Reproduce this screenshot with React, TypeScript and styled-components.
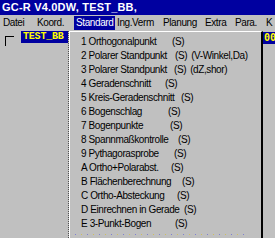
import React from "react";
import styled, { createGlobalStyle } from "styled-components";

const GlobalStyle = createGlobalStyle`
    html, body {
        margin: 0;
        padding: 0;
        background: #c0c0c0;
    }
`;

type MenuEntry = {
    label: string,
    width: number,
    active?: boolean
}

type Command = {
    label: string,
    tagAt: number,
    extra?: string
}

const menus: MenuEntry[] = [
    { label: "Datei", width: 34 },
    { label: "Koord.", width: 39 },
    { label: "Standard", width: 41, active: true },
    { label: "Ing.Verm", width: 46 },
    { label: "Planung", width: 42 },
    { label: "Extra", width: 30 },
    { label: "Para.", width: 31 },
    { label: "K", width: 10 },
];

const commands: Command[] = [
    { label: "1 Orthogonalpunkt", tagAt: 172 },
    { label: "2 Polarer Standpunkt", tagAt: 175, extra: "(V-Winkel,Da)" },
    { label: "3 Polarer Standpunkt", tagAt: 174, extra: "(dZ,shor)" },
    { label: "4 Geradenschnitt", tagAt: 165 },
    { label: "5 Kreis-Geradenschnitt", tagAt: 181 },
    { label: "6 Bogenschlag", tagAt: 168 },
    { label: "7 Bogenpunkte", tagAt: 170 },
    { label: "8 Spannmaßkontrolle", tagAt: 178 },
    { label: "9 Pythagorasprobe", tagAt: 174 },
    { label: "A Ortho+Polarabst.", tagAt: 171 },
    { label: "B Flächenberechnung", tagAt: 182 },
    { label: "C Ortho-Absteckung", tagAt: 177 },
    { label: "D Einrechnen in Gerade", tagAt: 184 },
    { label: "E 3-Punkt-Bogen", tagAt: 175 },
];

// text column of the dropdown starts here
const TEXT_X = 81;

const Screen = styled.div`
    width: 275px;
    height: 238px;
    overflow: hidden;
    display: flex;
    flex-direction: column;
    background: #c0c0c0;
    font-family: "Liberation Sans", Arial, sans-serif;
`;

const TitleBar = styled.div`
    height: 15px;
    line-height: 15px;
    padding-left: 2px;
    background: #0000a0;
    color: #ffffff;
    font-weight: bold;
    font-size: 11px;
    letter-spacing: 0.2px;
    white-space: nowrap;
`;

const MenuBar = styled.div`
    height: 16px;
    display: flex;
    align-items: center;
    padding-left: 1px;
    white-space: nowrap;
`;

const MenuItem = styled.div<{ $w: number, $active?: boolean }>`
    flex: 0 0 ${props => props.$w}px;
    height: 14px;
    line-height: 14px;
    padding-left: 2px;
    box-sizing: border-box;
    font-size: 10px;
    letter-spacing: -0.4px;
    background: ${props => props.$active ? "#0000a0" : "transparent"};
    color: ${props => props.$active ? "#ffffff" : "#000000"};
`;

const Workspace = styled.div`
    flex: 1;
    display: flex;
    min-height: 0;
`;

const LeftPane = styled.div`
    flex: 0 0 68px;
    display: flex;
    align-items: flex-start;
    border-right: 1px dotted #505050;
`;

const Bracket = styled.div`
    width: 8px;
    height: 9px;
    margin: 5px 0 0 5px;
    border-top: 1px solid #000000;
    border-left: 1px solid #000000;
`;

const DocHeader = styled.div`
    margin-left: auto;
    width: 47px;
    height: 12px;
    line-height: 12px;
    padding-left: 2px;
    box-sizing: border-box;
    background: #0000a0;
    color: #ffff00;
    font-family: "Liberation Mono", monospace;
    font-weight: bold;
    font-size: 10px;
    letter-spacing: -0.2px;
    white-space: nowrap;
    overflow: hidden;
`;

const Dropdown = styled.div`
    flex: 0 0 194px;
    box-sizing: border-box;
    border-top: 1px solid #ffffff;
    border-left: 1px solid #ffffff;
    border-right: 2px solid #000000;
    padding: 3px 0 0 ${TEXT_X - 69 - 1}px;
    background: #c0c0c0;
`;

const CommandRow = styled.div`
    display: flex;
    height: 14px;
    line-height: 14px;
    font-size: 10px;
    letter-spacing: -0.4px;
    white-space: nowrap;
    color: #000000;
`;

const CommandLabel = styled.span<{ $w: number }>`
    flex: 0 0 ${props => props.$w}px;
`;

const Tag = styled.span`
    margin-right: 4px;
`;

const Separator = styled.div`
    margin: 3px 12px 0 -6px;
    height: 1px;
    background: repeating-linear-gradient(90deg, #8080d0 0 1px, transparent 1px 6px, #d0c060 6px 7px, transparent 7px 12px);
`;

const RightPane = styled.div`
    flex: 1;
    padding-top: 1px;
    min-width: 0;
`;

const SideHeader = styled.div`
    height: 12px;
    line-height: 12px;
    padding-left: 1px;
    background: #0000a0;
    color: #ffff00;
    font-family: "DejaVu Sans Mono", monospace;
    font-weight: bold;
    font-size: 10px;
    white-space: nowrap;
    overflow: hidden;
`;

export default function App() {
    const menuItems = menus.map(m =>
        <MenuItem key={m.label} $w={m.width} $active={m.active}>{m.label}</MenuItem>);

    const rows = commands.map(c =>
        <CommandRow key={c.label}>
            <CommandLabel $w={c.tagAt - TEXT_X}>{c.label}</CommandLabel>
            <Tag>(S)</Tag>
            {c.extra && <span>{c.extra}</span>}
        </CommandRow>);

    return (
        <Screen>
            <GlobalStyle />
            <TitleBar>GC-R V4.0DW, TEST_BB,</TitleBar>
            <MenuBar>{menuItems}</MenuBar>
            <Workspace>
                <LeftPane>
                    <Bracket />
                    <DocHeader>TEST_BB</DocHeader>
                </LeftPane>
                <Dropdown>
                    {rows}
                    <Separator />
                </Dropdown>
                <RightPane>
                    <SideHeader>00</SideHeader>
                </RightPane>
            </Workspace>
        </Screen>
    );
}
